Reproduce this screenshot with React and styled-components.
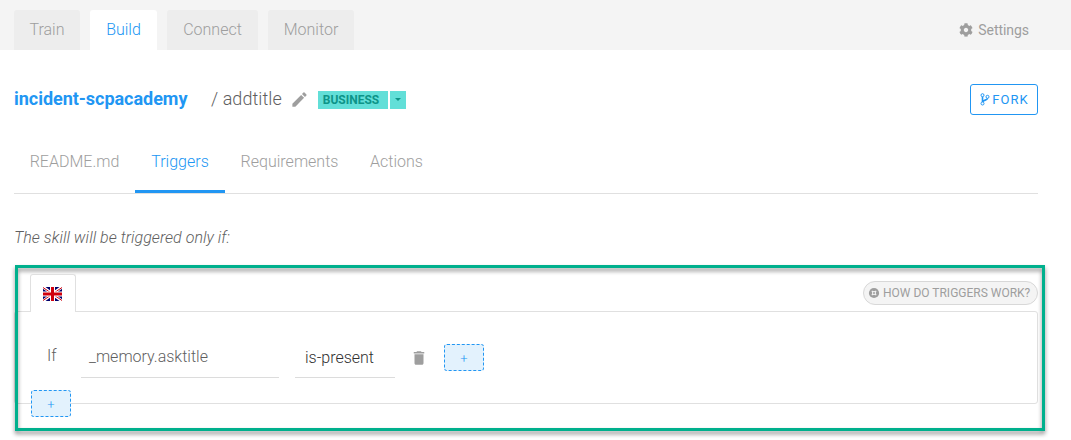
import React from "react";
import styled, { createGlobalStyle } from "styled-components";
import { FaCog } from "react-icons/fa";
import { MdEdit, MdDelete } from "react-icons/md";

const GlobalStyle = createGlobalStyle`
  * { box-sizing: border-box; }
  body {
    margin: 0;
    background: #fff;
    color: #5f5f5f;
    font-family: Roboto, sans-serif;
    font-size: 16px;
    font-weight: 300;
  }
  button { font-family: inherit; margin: 0; padding: 0; background: none; border: 0; }
  svg { display: block; flex: none; }
`;

const Page = styled.div`
  position: relative;
  width: 1071px;
  height: 440px;
  overflow: hidden;
`;

const TopBar = styled.header`
  display: flex;
  align-items: flex-end;
  justify-content: space-between;
  height: 50px;
  padding: 0 42px 0 14px;
  background: #f4f4f4;
`;

const TopTabs = styled.nav`
  display: flex;
  gap: 10px;
`;

const TopTab = styled.a`
  display: flex;
  justify-content: center;
  width: ${(p) => p.$width}px;
  height: 40px;
  line-height: 39px;
  border-radius: 3px 3px 0 0;
  background: ${(p) => (p.$active ? "#fff" : "#ededed")};
  color: ${(p) => (p.$active ? "#2196f3" : "#9e9e9e")};
`;

const Settings = styled.a`
  display: flex;
  align-items: center;
  gap: 5px;
  height: 40px;
  color: #9e9e9e;
  font-size: 14px;
  font-weight: 400;
  letter-spacing: -0.06px;
`;

const Main = styled.main`
  width: 1024px;
  margin-left: 14px;
`;

const TitleRow = styled.div`
  display: flex;
  align-items: center;
  height: 34px;
  margin-top: 32px;
  font-size: 18px;
`;

const BotName = styled.a`
  width: 197px;
  line-height: 34px;
  color: #2196f3;
  font-weight: 700;
  letter-spacing: -0.03px;
`;

const SkillName = styled.span`
  width: 80px;
  white-space: nowrap;
  line-height: 34px;
  letter-spacing: 0.06px;
`;

const EditIcon = styled(MdEdit)`
  width: 19px;
  height: 19px;
  margin: 1px 0 0 -1px;
  color: #9e9e9e;
`;

const Category = styled.div`
  display: flex;
  gap: 2px;
  margin: 2px 0 0 9px;
`;

const CategoryPart = styled.span`
  display: flex;
  align-items: center;
  justify-content: center;
  width: ${(p) => p.$width}px;
  height: 18px;
  background: #62dfd8;
  color: #0d9488;
  font-size: 12px;
  font-weight: 700;
  padding-right: ${(p) => p.$end || 0}px;
`;

const Caret = styled.i`
  width: 0;
  height: 0;
  margin-bottom: 1px;
  border: 0 solid transparent;
  border-width: 3px 3px 0;
  border-top-color: #0d9488;
`;

const ForkButton = styled.button`
  display: flex;
  align-items: center;
  justify-content: center;
  gap: 2px;
  width: 68px;
  height: 31px;
  margin: 1px 0 0 auto;
  padding-left: 1px;
  border: 1px solid #2196f3;
  border-radius: 3px;
  color: #2196f3;
  font-size: 13px;
  letter-spacing: 1.1px;
`;

const SubTabs = styled.nav`
  display: flex;
  height: 64px;
  margin-top: 14px;
  border-bottom: 1px solid #e0e0e0;
`;

const SubTab = styled.a`
  display: flex;
  justify-content: center;
  width: ${(p) => p.$width}px;
  height: 63px;
  line-height: 64px;
  border-bottom: 3px solid ${(p) => (p.$active ? "#2196f3" : "transparent")};
  color: ${(p) => (p.$active ? "#2196f3" : "#9e9e9e")};
`;

const Hint = styled.p`
  height: 20px;
  margin: 34px 0 0;
  line-height: 20px;
  font-style: italic;
  letter-spacing: 0.04px;
`;

const LanguageBar = styled.div`
  display: flex;
  justify-content: space-between;
  height: 38px;
  margin-top: 26px;
  padding-left: 16px;
`;

const LanguageTab = styled.div`
  display: flex;
  width: 46px;
  height: 38px;
  border: 1px solid #e0e0e0;
  border-bottom: 0;
  border-radius: 3px 3px 0 0;
  background: #fff;
  z-index: 1;
  padding: 12px 0 0 12px;
`;

const HelpPill = styled.button`
  display: flex;
  align-items: center;
  gap: 3px;
  width: 175px;
  height: 24px;
  margin-top: 7px;
  padding-left: 4px;
  border: 1px solid #d8d8d8;
  border-radius: 12px;
  background: #f4f4f4;
  color: #9e9e9e;
  font-size: 12px;
  white-space: nowrap;
`;

const Conditions = styled.section`
  height: 93px;
  margin-top: -1px;
  padding: 32px 0 0 16px;
  border: 1px solid #e0e0e0;
  border-radius: 3px;
`;

const ConditionRow = styled.div`
  display: flex;
  height: 34px;
`;

const Keyword = styled.span`
  width: 50px;
  padding-left: 16px;
  line-height: 24px;
`;

const Field = styled.div`
  width: ${(p) => p.$width}px;
  height: 34px;
  margin-right: 16px;
  padding-left: ${(p) => p.$indent}px;
  border-bottom: 1px solid #dcdcdc;
  line-height: ${(p) => p.$line}px;
  color: ${(p) => p.$color};
`;

const DeleteIcon = styled(MdDelete)`
  width: 18px;
  height: 18px;
  margin: 5px 16px 0 -1px;
  color: #9e9e9e;
`;

const AddButton = styled.button`
  display: flex;
  align-items: center;
  justify-content: center;
  width: 40px;
  height: 27px;
  margin-top: ${(p) => p.$top || 0}px;
  padding-top: 1px;
  border: 1px dashed #2196f3;
  border-radius: 3px;
  background: #e3f2fd;
  color: #2196f3;
  font-size: 13px;
  font-weight: 300;
`;

const Highlight = styled.div`
  position: absolute;
  left: 15px;
  top: 265px;
  width: 1030px;
  height: 166px;
  border: 3px solid #00b08d;
  filter: drop-shadow(0 3px 2px rgba(0, 0, 0, 0.45));
  pointer-events: none;
`;

const UkFlag = () => (
  <svg width="19" height="14" viewBox="0 0 19 14">
    <path fill="#00006b" d="M0 0h19v14H0z" />
    <path stroke="#fff" strokeWidth="3" d="M0 0l19 14M19 0L0 14" />
    <path stroke="#d0000d" strokeWidth="1" d="M0 .5l19 13M19 .5l-19 13" />
    <path stroke="#fff" strokeWidth="5" d="M9.5 0v14M0 7h19" />
    <path stroke="#d0000d" strokeWidth="3" d="M9.5 0v14M0 7h19" />
  </svg>
);

const ForkIcon = () => (
  <svg width="10" height="13" viewBox="0 0 10 13" fill="none" stroke="currentColor" strokeWidth="1">
    <circle cx="2.5" cy="2.2" r="1.5" />
    <circle cx="2.5" cy="10.5" r="1.5" />
    <circle cx="7.5" cy="3.8" r="1.5" />
    <path strokeWidth="1.6" d="M2.5 3.8V9M7.5 5.2C7.5 7.6 3.2 6.6 2.7 9" />
  </svg>
);

const HelpIcon = () => (
  <svg width="12" height="12" viewBox="0 0 12 12">
    <circle cx="6" cy="6" r="5.1" fill="currentColor" />
    <path stroke="#f4f4f4" strokeWidth="1.2" d="M3.8 3.8l4.4 4.4M8.2 3.8L3.8 8.2" />
    <circle cx="6" cy="6" r="2" fill="#f4f4f4" />
    <circle cx="6" cy="6" r="1" fill="currentColor" />
  </svg>
);

export default function App() {
  return (
    <Page>
      <GlobalStyle />
      <TopBar>
        <TopTabs>
          <TopTab $width={66}>Train</TopTab>
          <TopTab $width={67} $active>Build</TopTab>
          <TopTab $width={91}>Connect</TopTab>
          <TopTab $width={86}>Monitor</TopTab>
        </TopTabs>
        <Settings><FaCog size={14} />Settings</Settings>
      </TopBar>
      <Main>
        <TitleRow>
          <BotName>incident-scpacademy</BotName>
          <SkillName>/ addtitle</SkillName>
          <EditIcon />
          <Category>
            <CategoryPart $width={70} $end={4}>BUSINESS</CategoryPart>
            <CategoryPart $width={16}><Caret /></CategoryPart>
          </Category>
          <ForkButton><ForkIcon />FORK</ForkButton>
        </TitleRow>
        <SubTabs>
          <SubTab $width={121}>README.md</SubTab>
          <SubTab $width={90} $active>Triggers</SubTab>
          <SubTab $width={129}>Requirements</SubTab>
          <SubTab $width={85}>Actions</SubTab>
        </SubTabs>
        <Hint>The skill will be triggered only if:</Hint>
        <LanguageBar>
          <LanguageTab><UkFlag /></LanguageTab>
          <HelpPill><HelpIcon />HOW DO TRIGGERS WORK?</HelpPill>
        </LanguageBar>
        <Conditions>
          <ConditionRow>
            <Keyword>If</Keyword>
            <Field $width={198} $indent={8} $line={26} $color="#5f5f5f">_memory.asktitle</Field>
            <Field $width={100} $indent={10} $line={28} $color="#303030">is-present</Field>
            <DeleteIcon />
            <AddButton>+</AddButton>
          </ConditionRow>
          <AddButton $top={12}>+</AddButton>
        </Conditions>
      </Main>
      <Highlight />
    </Page>
  );
}
